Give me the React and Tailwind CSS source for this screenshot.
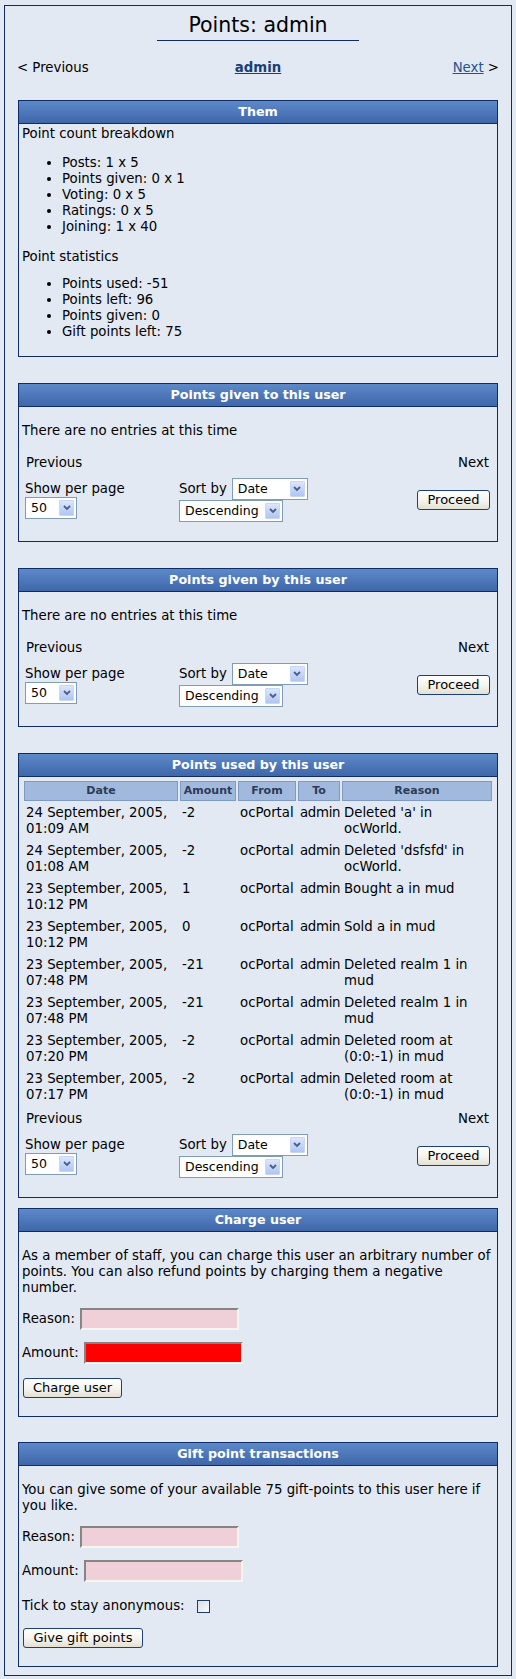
import React from "react";

const rows = [
  ["24 September, 2005,", "01:09 AM", "-2", ["Deleted 'a' in", "ocWorld."]],
  ["24 September, 2005,", "01:08 AM", "-2", ["Deleted 'dsfsfd' in", "ocWorld."]],
  ["23 September, 2005,", "10:12 PM", "1", ["Bought a in mud"]],
  ["23 September, 2005,", "10:12 PM", "0", ["Sold a in mud"]],
  ["23 September, 2005,", "07:48 PM", "-21", ["Deleted realm 1 in", "mud"]],
  ["23 September, 2005,", "07:48 PM", "-21", ["Deleted realm 1 in", "mud"]],
  ["23 September, 2005,", "07:20 PM", "-2", ["Deleted room at", "(0:0:-1) in mud"]],
  ["23 September, 2005,", "07:17 PM", "-2", ["Deleted room at", "(0:0:-1) in mud"]],
];

function Box({ title, className, children }) {
  return (
    <section className={`border border-[#0e2c68] ${className}`}>
      <div className="h-[23px] border-b border-[#0e2c68] bg-linear-to-b from-[#5d89c9] to-[#3f67a9] text-center text-[12.7px] font-bold leading-[22px] text-white">
        {title}
      </div>
      <div className="px-[3px] pb-[3px]">{children}</div>
    </section>
  );
}

function Chevron() {
  return (
    <svg width="8" height="6" viewBox="0 0 8 6">
      <path d="M1 1 L4 4 L7 1" fill="none" stroke="#4a5f86" strokeWidth="1.8" />
    </svg>
  );
}

function Select({ width, label }) {
  return (
    <span
      className={`flex h-[22px] items-center justify-between border border-[#7f9db9] bg-white ${width}`}
    >
      <span className="whitespace-nowrap pl-[5px] text-[12.5px] leading-none">{label}</span>
      <span className="mr-[2px] flex h-[16px] w-[15px] items-center justify-center rounded-[1px] border border-[#c6d6fb] bg-linear-to-b from-[#dce6fc] to-[#b0c5f3]">
        <Chevron />
      </span>
    </span>
  );
}

function XpButton({ width, children, className }) {
  return (
    <button
      className={`h-[20px] rounded-[3px] border border-[#1d4177] bg-linear-to-b from-[#ffffff] via-[#f6f5f0] to-[#e3e0d3] text-[13px] leading-[18px] text-black ${width} ${className}`}
    >
      {children}
    </button>
  );
}

function Pager({ className }) {
  return (
    <div className={`pb-[16px] pl-[3px] pr-[4px] pt-[4px] ${className}`}>
      <div className="flex justify-between px-px leading-[16px]">
        <span>Previous</span>
        <span>Next</span>
      </div>
      <div className="mt-[7px] flex h-[44px] items-center">
        <div className="w-[154px]">
          <div className="leading-[16px]">Show per page</div>
          <Select width="w-[52px]" label="50" />
        </div>
        <div className="flex-1">
          <div className="flex items-center gap-[5px]">
            <span className="leading-[16px]">Sort by</span>
            <Select width="w-[76px]" label="Date" />
          </div>
          <Select width="w-[104px]" label="Descending" />
        </div>
        <XpButton width="w-[73px]">Proceed</XpButton>
      </div>
    </div>
  );
}

function EmptyBox({ title, className }) {
  return (
    <Box title={title} className={className}>
      <p className="mt-[16px] leading-[16px]">There are no entries at this time</p>
      <Pager className="mt-[12px]" />
    </Box>
  );
}

function Field({ label, fill }) {
  return (
    <div className="flex items-center gap-[5px]">
      <span className="leading-[16px]">{label}</span>
      <span
        className={`h-[22px] w-[159px] border-2 border-b-[#f7f5f0] border-l-[#858585] border-r-[#f7f5f0] border-t-[#858585] ${fill}`}
      />
    </div>
  );
}

export default function App() {
  return (
    <div className="min-h-screen bg-[#e2e9f2] px-[4px] pb-[2px] pt-[5px] font-['DejaVu_Sans',sans-serif] text-[13.3px] leading-[16px] text-black">
      <div className="border border-[#0e2c68] px-[13px] pb-[8px]">
        <div className="pt-[7px] text-center">
          <h1 className="inline-block border-b border-[#0e2c68] px-[31px] pb-[3px] text-[20.5px] font-normal leading-[24px]">
            Points: admin
          </h1>
        </div>

        <div className="-mx-px mt-[19px] grid grid-cols-3 leading-[16px]">
          <span>&lt; Previous</span>
          <span className="text-center">
            <a className="font-bold text-[#183f7a] underline">admin</a>
          </span>
          <span className="text-right">
            <a className="text-[#24528f] underline">Next</a> &gt;
          </span>
        </div>

        <Box title="Them" className="mt-[24px]">
          <div className="mt-[2px]">Point count breakdown</div>
          <ul className="mt-[13px] list-disc pl-[40px]">
            <li>Posts: 1 x 5</li>
            <li>Points given: 0 x 1</li>
            <li>Voting: 0 x 5</li>
            <li>Ratings: 0 x 5</li>
            <li>Joining: 1 x 40</li>
          </ul>
          <div className="mt-[14px]">Point statistics</div>
          <ul className="mb-[13px] mt-[11px] list-disc pl-[40px]">
            <li>Points used: -51</li>
            <li>Points left: 96</li>
            <li>Points given: 0</li>
            <li>Gift points left: 75</li>
          </ul>
        </Box>

        <EmptyBox title="Points given to this user" className="mt-[26px]" />
        <EmptyBox title="Points given by this user" className="mt-[26px]" />

        <Box title="Points used by this user" className="mt-[26px]">
          <div className="mt-[2px] grid grid-cols-[154px_56px_58px_42px_150px] gap-[2px] p-[2px]">
            {["Date", "Amount", "From", "To", "Reason"].map((h) => (
              <div
                key={h}
                className="h-[20px] border border-[#7e99c4] bg-[#a2b9de] text-center text-[11px] font-bold leading-[18px] text-[#2c3b58]"
              >
                {h}
              </div>
            ))}
            {rows.map((r, i) => (
              <React.Fragment key={i}>
                <div className="whitespace-nowrap p-[2px]">
                  {r[0]}
                  <br />
                  {r[1]}
                </div>
                <div className="whitespace-nowrap p-[2px]">{r[2]}</div>
                <div className="whitespace-nowrap p-[2px]">ocPortal</div>
                <div className="whitespace-nowrap p-[2px] tracking-[-0.3px]">admin</div>
                <div className="whitespace-nowrap p-[2px]">
                  {r[3].map((l, j) => (
                    <div key={j}>{l}</div>
                  ))}
                </div>
              </React.Fragment>
            ))}
          </div>
          <Pager />
        </Box>

        <Box title="Charge user" className="mt-[10px]">
          <p className="mt-[16px] whitespace-nowrap">
            As a member of staff, you can charge this user an arbitrary number of
            <br />
            points. You can also refund points by charging them a negative
            <br />
            number.
          </p>
          <div className="mt-[12px]">
            <Field label="Reason:" fill="bg-[#f0d0d8]" />
          </div>
          <div className="mt-[12px]">
            <Field label="Amount:" fill="bg-[#ff0000]" />
          </div>
          <div className="mb-[15px] mt-[14px]">
            <XpButton width="w-[99px]" className="ml-px">
              Charge user
            </XpButton>
          </div>
        </Box>

        <Box title="Gift point transactions" className="mt-[25px]">
          <p className="mt-[16px] whitespace-nowrap">
            You can give some of your available 75 gift-points to this user here if
            <br />
            you like.
          </p>
          <div className="mt-[12px]">
            <Field label="Reason:" fill="bg-[#f0d0d8]" />
          </div>
          <div className="mt-[12px]">
            <Field label="Amount:" fill="bg-[#f0d0d8]" />
          </div>
          <div className="mt-[16px] flex items-center leading-[16px]">
            <span>Tick to stay anonymous:</span>
            <span className="ml-[12px] h-[13px] w-[13px] border border-[#1c3c6c] bg-linear-to-br from-[#dcdfe3] to-[#f8f9fb]" />
          </div>
          <div className="mb-[15px] mt-[14px]">
            <XpButton width="w-[120px]" className="ml-px">
              Give gift points
            </XpButton>
          </div>
        </Box>
      </div>
    </div>
  );
}
